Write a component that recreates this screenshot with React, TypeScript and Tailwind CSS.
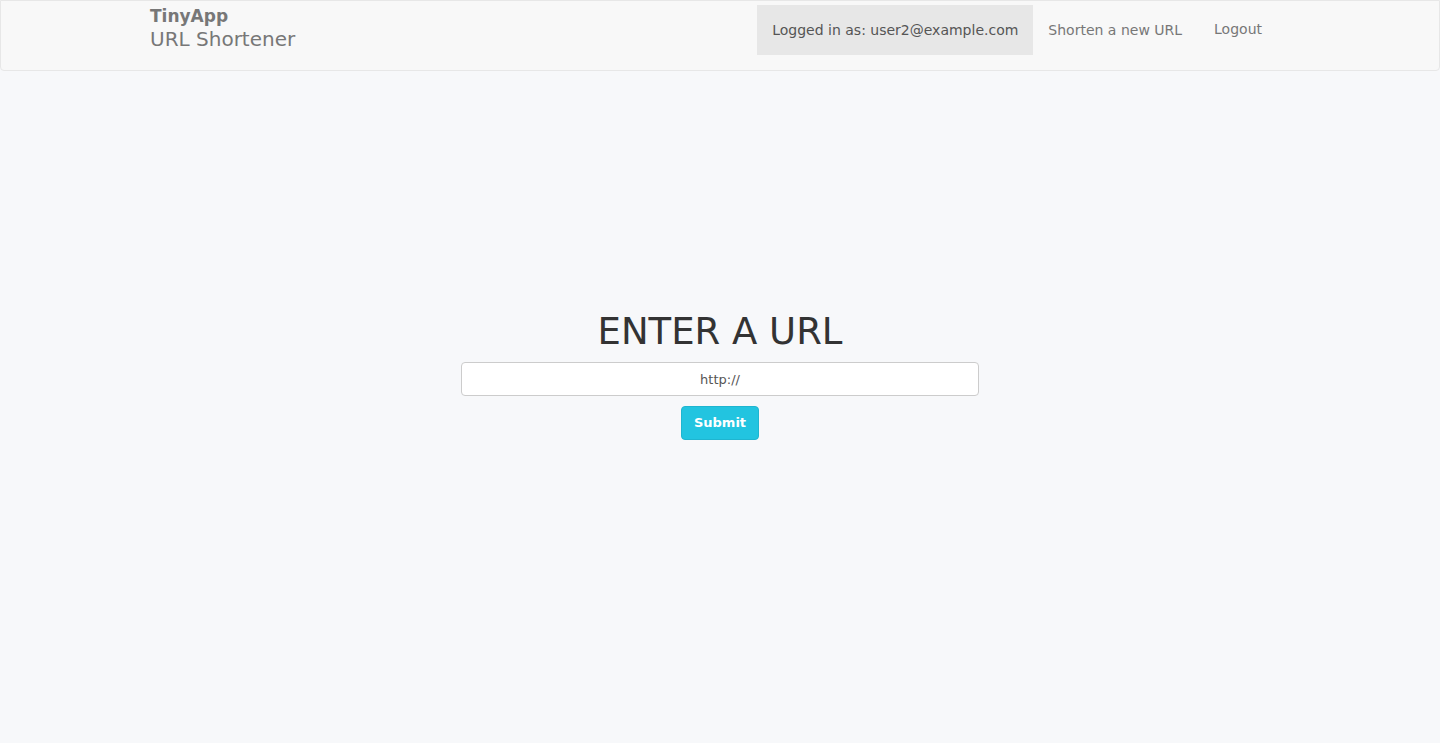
export default function App() {
  const font = { fontFamily: '"DejaVu Sans", "Open Sans", sans-serif' };
  return (
    <div className="min-h-[743px] bg-[#f7f8fa] text-[#555]" style={font}>
      <nav className="h-[71px] rounded-b-[4px] border border-[#e7e7e7] bg-[#f8f8f8]">
        <div className="mx-auto flex h-full w-[1170px] items-start justify-between px-[15px]">
          <div className="pt-[5px] leading-tight text-[#777]">
            <div className="text-[17px] font-bold">TinyApp</div>
            <div className="text-[20px]">URL Shortener</div>
          </div>
          <ul className="mr-[13px] flex items-start pt-[4px] text-[14px]">
            <li className="flex h-[50px] items-center bg-[#e7e7e7] px-[15px] text-[#555]">
              Logged in as: user2@example.com
            </li>
            <li className="flex h-[50px] items-center px-[15px] text-[#777]">Shorten a new URL</li>
            <li className="flex h-[50px] items-center pl-[17px] pr-[15px] pb-[2px] text-[#777]">Logout</li>
          </ul>
        </div>
      </nav>
      <main className="flex flex-col items-center pt-[240px]">
        <h1 className="text-[37px] leading-[42px] text-[#333]">ENTER A URL</h1>
        <input
          readOnly
          value="http://"
          className="mt-[9px] h-[34px] w-[518px] rounded-[4px] border border-[#ccc] bg-white text-center text-[13px] text-[#555] outline-none"
        />
        <button className="mt-[10px] h-[34px] w-[78px] rounded-[4px] border border-[#1fb5d0] bg-[#22c4e0] text-[13px] font-bold text-white">
          Submit
        </button>
      </main>
    </div>
  );
}
